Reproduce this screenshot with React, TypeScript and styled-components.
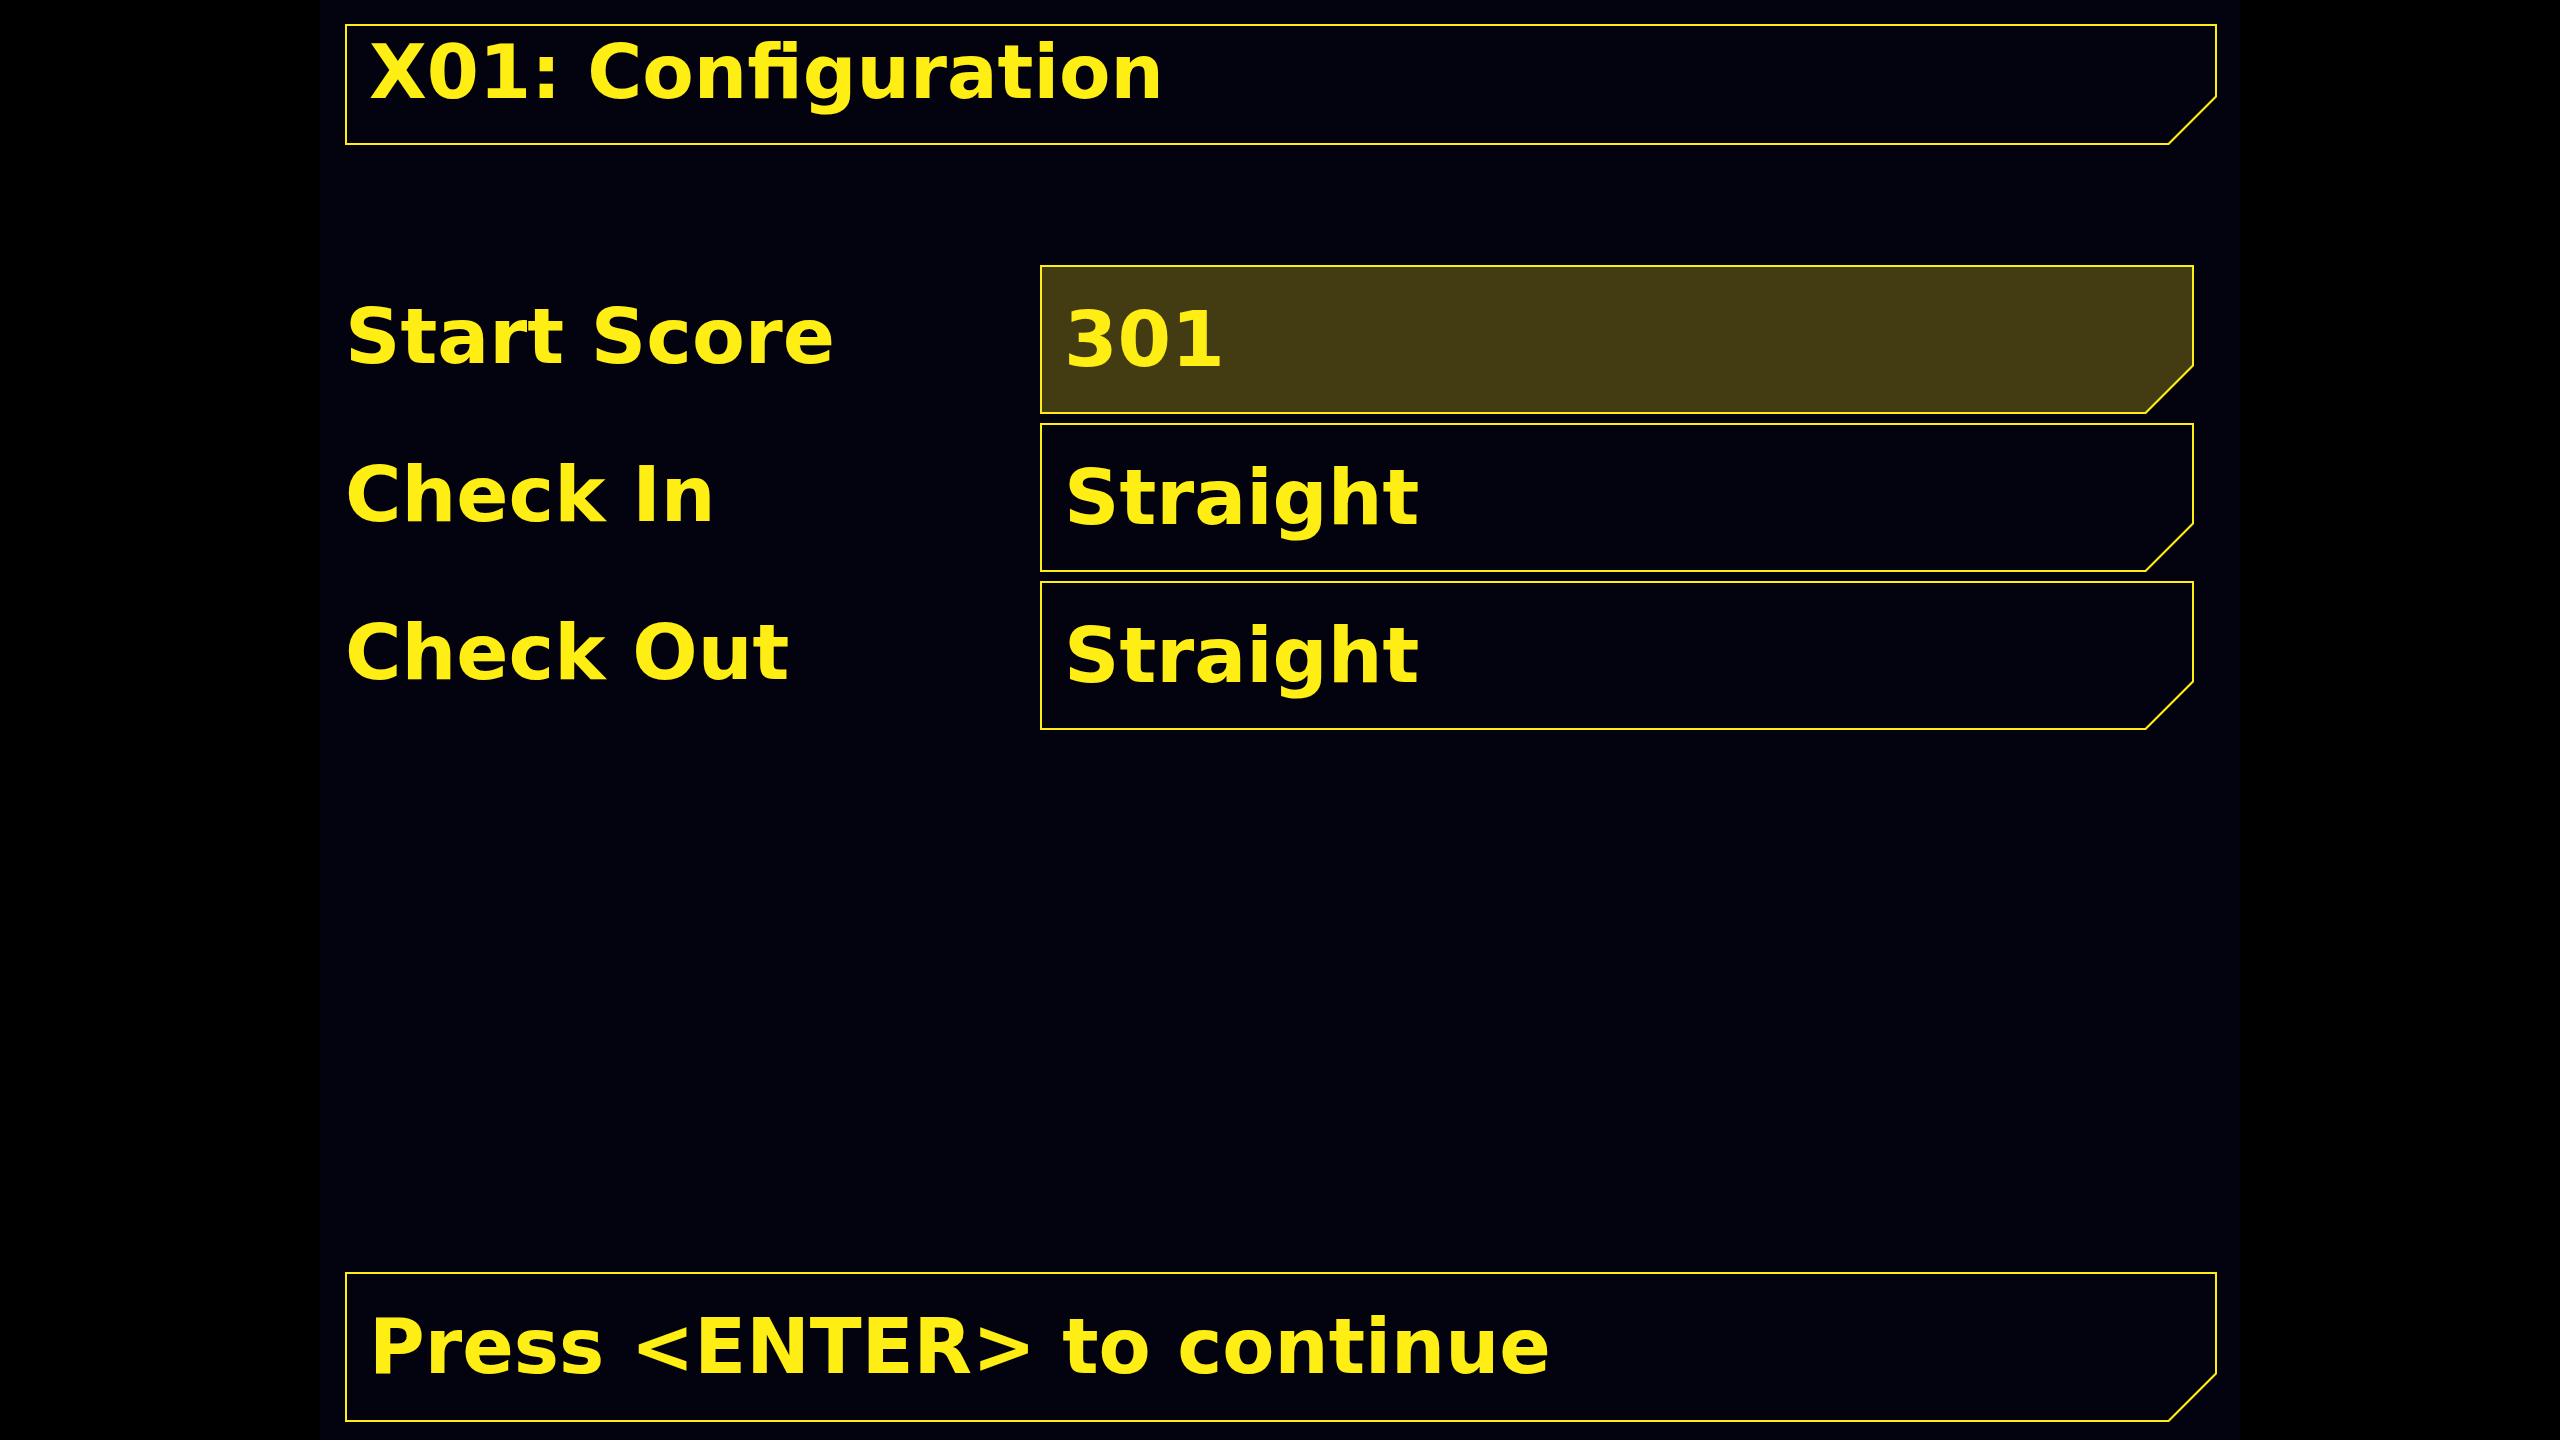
import React from "react";
import styled, { createGlobalStyle } from "styled-components";

const YELLOW = "#ffee14";
const PANEL = "#03030f";
const OLIVE = "#433c13";
const CUT = 48;
const CUT_INNER = 47;

const GlobalStyle = createGlobalStyle`
  html, body {
    margin: 0;
    padding: 0;
    background: #000;
  }
  body {
    font-family: "DejaVu Sans", "Liberation Sans", sans-serif;
  }
`;

const Screen = styled.div`
  width: 100%;
  height: 100vh;
  display: flex;
  justify-content: center;
  background: #000;
`;

const Panel = styled.main`
  width: 1920px;
  height: 1440px;
  box-sizing: border-box;
  background: ${PANEL};
  display: flex;
  flex-direction: column;
  padding: 24px 23px 18px 25px;
`;

const Frame = styled.div<{ $height: number }>`
  height: ${(p) => p.$height}px;
  box-sizing: border-box;
  padding: 2px;
  background: ${YELLOW};
  clip-path: polygon(
    0 0,
    100% 0,
    100% calc(100% - ${CUT}px),
    calc(100% - ${CUT}px) 100%,
    0 100%
  );
  display: flex;
`;

const FrameInner = styled.div<{ $fill?: string; $align?: string; $padTop?: number }>`
  flex: 1;
  background: ${(p) => p.$fill ?? PANEL};
  clip-path: polygon(
    0 0,
    100% 0,
    100% calc(100% - ${CUT_INNER}px),
    calc(100% - ${CUT_INNER}px) 100%,
    0 100%
  );
  display: flex;
  align-items: ${(p) => p.$align ?? "center"};
  padding: ${(p) => p.$padTop ?? 0}px 0 0 22px;
`;

const Text = styled.span<{ $size?: number }>`
  font-family: "DejaVu Sans", "Liberation Sans", sans-serif;
  font-weight: 700;
  font-size: ${(p) => p.$size ?? 77}px;
  line-height: 1;
  color: ${YELLOW};
  white-space: nowrap;
`;

const Settings = styled.section`
  margin-top: 120px;
  display: grid;
  grid-template-columns: 695px 1154px;
  grid-auto-rows: 149px;
  row-gap: 9px;
`;

const Label = styled.div`
  display: flex;
  align-items: center;
  padding-bottom: 6px;
`;

const Footer = styled.footer`
  margin-top: auto;
`;

const rows = [
  { label: "Start Score", value: "301", active: true },
  { label: "Check In", value: "Straight", active: false },
  { label: "Check Out", value: "Straight", active: false },
];

export default function App() {
  return (
    <>
      <GlobalStyle />
      <Screen>
        <Panel>
          <Frame $height={121}>
            <FrameInner $align="flex-start" $padTop={9}>
              <Text $size={75}>X01: Configuration</Text>
            </FrameInner>
          </Frame>

          <Settings>
            {rows.map((r) => (
              <React.Fragment key={r.label}>
                <Label>
                  <Text $size={77}>{r.label}</Text>
                </Label>
                <Frame $height={149}>
                  <FrameInner $fill={r.active ? OLIVE : PANEL}>
                    <Text>{r.value}</Text>
                  </FrameInner>
                </Frame>
              </React.Fragment>
            ))}
          </Settings>

          <Footer>
            <Frame $height={150}>
              <FrameInner>
                <Text $size={76}>Press &lt;ENTER&gt; to continue</Text>
              </FrameInner>
            </Frame>
          </Footer>
        </Panel>
      </Screen>
    </>
  );
}
